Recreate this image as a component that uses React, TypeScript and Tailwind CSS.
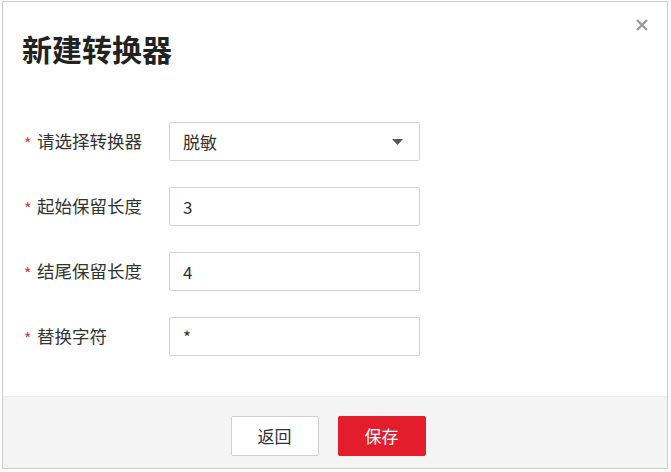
import React from 'react'

const font = { fontFamily: '"Noto Sans CJK SC", "Noto Sans", sans-serif' }

type FieldProps = { label: string; value: string; select?: boolean }

function Field({ label, value, select }: FieldProps) {
  return (
    <div className="flex items-center h-[39px]">
      <div className="w-[145px] flex items-center text-[17.5px] text-[#333]">
        <span className="text-[#e4393c] w-[13px] text-[16px] leading-none mt-[2px]">*</span>
        <span>{label}</span>
      </div>
      <div className="w-[251px] h-[39px] border border-[#d4d4d4] rounded-[2px] bg-white flex items-center pl-[13px] pr-[16px] text-[17px] text-[#333]">
        <span className="flex-1">{value}</span>
        {select && (
          <svg width="11" height="6" viewBox="0 0 11 6">
            <path d="M0 0 H11 L5.5 6 Z" fill="#555" />
          </svg>
        )}
      </div>
    </div>
  )
}

export default function App() {
  return (
    <div className="w-[671px] h-[472px] bg-white pt-[1px] pl-[2px]" style={font}>
      <div className="w-[666px] h-[468px] border border-[#cccccc] flex flex-col">
        <div className="relative h-[120px]">
          <h2 className="absolute left-[19px] top-[27px] text-[30px] font-bold text-[#222] leading-[38px]">
            新建转换器
          </h2>
          <svg className="absolute right-[19px] top-[17px]" width="12" height="12" viewBox="0 0 12 12">
            <path d="M1 1 L11 11 M11 1 L1 11" stroke="#999" strokeWidth="2.2" />
          </svg>
        </div>
        <div className="flex-1 flex flex-col gap-[26px] pl-[21px]">
          <Field label="请选择转换器" value="脱敏" select />
          <Field label="起始保留长度" value="3" />
          <Field label="结尾保留长度" value="4" />
          <Field label="替换字符" value="*" />
        </div>
        <div className="h-[72px] bg-[#f4f4f4] border-t border-[#ebebeb] flex justify-center gap-[19px] pt-[19px] pr-[14px]">
          <button className="w-[88px] h-[40px] bg-white border border-[#cfcfcf] rounded-[2px] text-[17px] text-[#333]">
            返回
          </button>
          <button className="w-[88px] h-[40px] bg-[#e41d2c] rounded-[2px] text-[17px] text-white">
            保存
          </button>
        </div>
      </div>
    </div>
  )
}
